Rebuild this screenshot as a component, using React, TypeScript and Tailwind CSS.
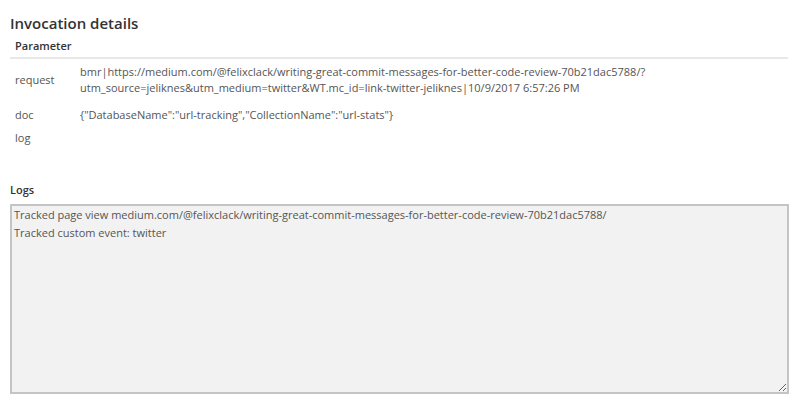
const logText =
  'Tracked page view medium.com/@felixclack/writing-great-commit-messages-for-better-code-review-70b21dac5788/\nTracked custom event: twitter'

const params = [
  {
    name: 'request',
    gap: 'mb-[11px]',
    lines: [
      'bmr|https://medium.com/@felixclack/writing-great-commit-messages-for-better-code-review-70b21dac5788/?',
      'utm_source=jeliknes&utm_medium=twitter&WT.mc_id=link-twitter-jeliknes|10/9/2017 6:57:26 PM',
    ],
  },
  { name: 'doc', gap: 'mb-[7px]', lines: ['{"DatabaseName":"url-tracking","CollectionName":"url-stats"}'] },
  { name: 'log', gap: 'mb-[7px]', lines: [] },
]

const font = '"Segoe UI", "Open Sans", "Liberation Sans", sans-serif'

function App() {
  return (
    <div className="w-[800px] h-[405px] bg-white text-[#555] px-[10px] pt-[12px]" style={{ fontFamily: font }}>
      <h2 className="text-[15px] leading-[22px] font-semibold text-[#333]">Invocation details</h2>

      {/* パラメータ */}
      <div className="mt-[4px] w-[778px]">
        <div className="pl-[5px] pb-[3px] text-[11px] leading-[16px] font-semibold text-[#333] border-b-2 border-[#e8e8e8]">
          Parameter
        </div>
        <div className="pt-[5px]">
          {params.map((p) => (
            <div key={p.name} className={`flex items-center min-h-[16px] text-[11px] leading-[16px] ${p.gap}`}>
              <div className="w-[70px] pl-[5px] shrink-0">{p.name}</div>
              <div>
                {p.lines.map((l) => (
                  <div key={l} className="whitespace-nowrap">{l}</div>
                ))}
              </div>
            </div>
          ))}
        </div>
      </div>

      {/* ログ */}
      <div className="mt-[36px] text-[11px] leading-[16px] font-semibold text-[#333]">Logs</div>
      <textarea
        readOnly
        defaultValue={logText}
        className="block mt-[6px] w-[779px] h-[190px] border-2 border-[#c4c4c4] bg-[#f2f2f2] px-[2px] py-0 text-[11px] leading-[18px] text-[#555] outline-none"
        style={{ fontFamily: font }}
      />
    </div>
  )
}

export default App
